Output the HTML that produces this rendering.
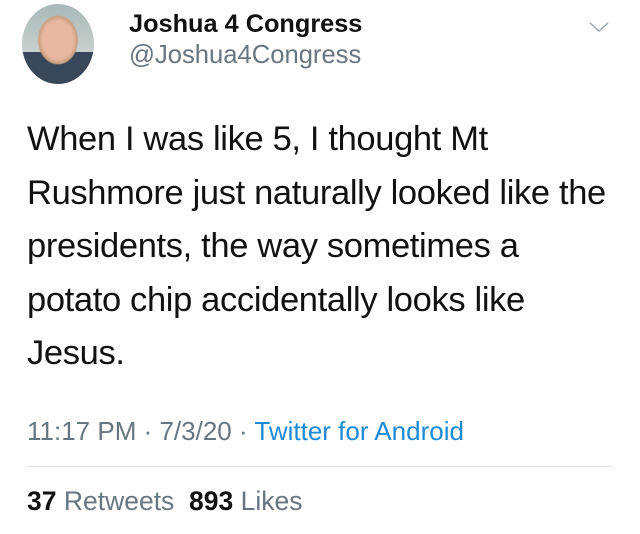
<!DOCTYPE html>
<html><head><style>
body{margin:0;width:640px;height:534px;background:#fff;font-family:"Liberation Sans",sans-serif;position:relative;overflow:hidden}
.av{position:absolute;left:22px;top:4px;width:72px;height:80px;border-radius:50%;background:radial-gradient(ellipse at 50% 45%,#e8b8a0 0 30%,#c9a080 38%,transparent 40%),linear-gradient(#a8b8b8,#c8d0cc 60%,#38485a 60%);}
.name{position:absolute;left:129px;top:10px;font-size:25.3px;font-weight:bold;color:#111}
.handle{position:absolute;left:129px;top:41px;font-size:25.6px;color:#687680}
.body{position:absolute;left:27px;top:113px;width:610px;font-size:34.5px;line-height:53.5px;color:#111;letter-spacing:-0.35px;white-space:nowrap}
.meta{position:absolute;left:27px;top:416px;font-size:26px;color:#687680}
.meta span{color:#1b8ad6}
.hr{position:absolute;left:27px;right:28px;top:466px;height:1px;background:#dde2e6}
.stats{position:absolute;left:27px;top:486px;font-size:26.5px;color:#687680}
.stats b{color:#111}
</style></head><body>
<div class="av"></div>
<div class="name">Joshua 4 Congress</div>
<div class="handle">@Joshua4Congress</div>
<svg style="position:absolute;left:588px;top:20px" width="22" height="14"><path d="M2 3 L11 11 L20 3" stroke="#9aa5ad" stroke-width="1.5" fill="none"/></svg>
<div class="body">When I was like 5, I thought Mt<br>Rushmore just naturally looked like the<br>presidents, the way sometimes a<br>potato chip accidentally looks like<br>Jesus.</div>
<div class="meta">11:17 PM · 7/3/20 · <span>Twitter for Android</span></div>
<div class="hr"></div>
<div class="stats"><b>37</b> Retweets &nbsp;<b>893</b> Likes</div>
</body></html>
